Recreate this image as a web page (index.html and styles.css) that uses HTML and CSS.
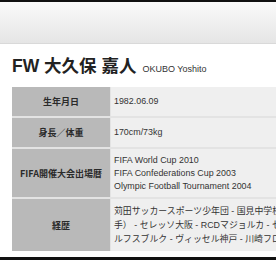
FILE: index.html
```html
<!DOCTYPE html>
<html lang="ja">
<head>
<meta charset="utf-8">
<link rel="stylesheet" href="styles.css">
</head>
<body>
<div class="topbar"></div>
<h1 class="name">FW 大久保 嘉人<span class="roman">OKUBO Yoshito</span></h1>
<table class="profile">
  <tr class="r1"><th>生年月日</th><td>1982.06.09</td></tr>
  <tr class="r2"><th>身長／体重</th><td>170cm/73kg</td></tr>
  <tr class="r3"><th>FIFA開催大会出場暦</th><td>FIFA World Cup 2010<br>FIFA Confederations Cup 2003<br>Olympic Football Tournament 2004</td></tr>
  <tr class="r4"><th>経歴</th><td>苅田サッカースポーツ少年団 - 国見中学校 - 国見高校（JFA特別指定選<br>手） - セレッソ大阪 - RCDマジョルカ - セレッソ大阪 - VfLヴォ<br>ルフスブルク - ヴィッセル神戸 - 川崎フロンターレ</td></tr>
</table>
<div class="footer"></div>
</body>
</html>
```
FILE: styles.css
```css
html, body {
  margin: 0;
  padding: 0;
  background: #fff;
  width: 276px;
  height: 260px;
  overflow: hidden;
}
body {
  font-family: "Liberation Sans", "Noto Sans CJK JP", sans-serif;
  color: #222;
}
.topbar {
  border-top: 2px solid #111;
  height: 41px;
  background: linear-gradient(#fafafa, #e5e5e5);
  border-bottom: 1px solid #d9d9d9;
}
.name {
  margin: 11px 0 0 12px;
  height: 22px;
  font-family: "Liberation Sans", "Noto Sans CJK JP", sans-serif;
  font-size: 17.5px;
  font-weight: bold;
  line-height: 22px;
  color: #222;
  white-space: nowrap;
}
.roman {
  font-size: 9px;
  font-weight: normal;
  margin-left: 6px;
  color: #333;
}
.profile {
  margin: 10px 0 0 12px;
  border-collapse: separate;
  border-spacing: 0;
  table-layout: fixed;
  width: 420px;
}
.profile th, .profile td {
  box-sizing: content-box;
  padding-top: 0;
  padding-bottom: 0;
  border-bottom: 2px solid #e3e3e3;
}
.profile th {
  width: 98px;
  background: #b9b9b9;
  font-family: "Noto Sans CJK JP", sans-serif;
  font-size: 9px;
  font-weight: bold;
  color: #2a2a2a;
  text-align: center;
  padding-left: 0;
  padding-right: 0;
}
.profile td {
  background: #efefef;
  font-family: "Liberation Sans", "Noto Sans CJK JP", sans-serif;
  font-size: 8.9px;
  line-height: 13px;
  color: #333;
  padding-left: 3px;
  padding-right: 0;
  border-left: 1px solid #e3e3e3;
  white-space: nowrap;
}
.r1 th, .r1 td { height: 29px; }
.r2 th, .r2 td { height: 29px; }
.r3 th, .r3 td { height: 48px; }
.r4 th, .r4 td { height: 52px; border-bottom: none; }
.r4 td { line-height: 14px; }
.footer {
  margin-top: 6px;
  border-top: 3px solid #111;
}
```
